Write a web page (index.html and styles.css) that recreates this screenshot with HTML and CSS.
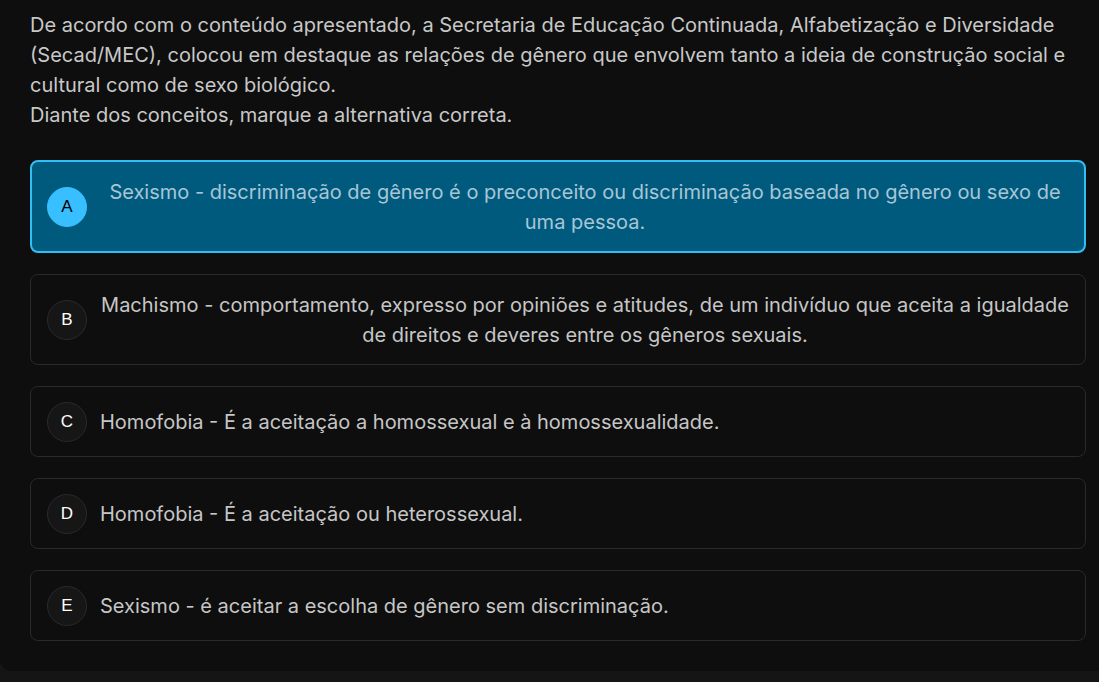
FILE: index.html
```html
<!DOCTYPE html>
<html lang="pt-BR">
<head>
<meta charset="utf-8">
<title>Questão</title>
<link rel="stylesheet" href="styles.css">
</head>
<body>
<div class="card">
  <div class="question">
    <p>De acordo com o conteúdo apresentado, a Secretaria de Educação Continuada, Alfabetização e Diversidade (Secad/MEC), colocou em destaque as relações de gênero que envolvem tanto a ideia de construção social e cultural como de sexo biológico.</p>
    <p>Diante dos conceitos, marque a alternativa correta.</p>
  </div>
  <div class="options">
    <div class="option selected">
      <span class="letter">A</span>
      <p class="text">Sexismo - discriminação de gênero é o preconceito ou discriminação baseada no gênero ou sexo de uma pessoa.</p>
    </div>
    <div class="option">
      <span class="letter">B</span>
      <p class="text">Machismo - comportamento, expresso por opiniões e atitudes, de um indivíduo que aceita a igualdade de direitos e deveres entre os gêneros sexuais.</p>
    </div>
    <div class="option">
      <span class="letter">C</span>
      <p class="text">Homofobia - É a aceitação a homossexual e à homossexualidade.</p>
    </div>
    <div class="option">
      <span class="letter">D</span>
      <p class="text">Homofobia - É a aceitação ou heterossexual.</p>
    </div>
    <div class="option">
      <span class="letter">E</span>
      <p class="text">Sexismo - é aceitar a escolha de gênero sem discriminação.</p>
    </div>
  </div>
</div>
</body>
</html>
```

FILE: styles.css
```css
html, body {
  margin: 0;
  padding: 0;
  background: #151515;
  height: 100%;
}
body {
  font-family: Inter, "Noto Sans", sans-serif;
  color: #c8c8c8;
  overflow: hidden;
}
.card {
  background: #0e0e0e;
  width: 1120px;
  box-sizing: border-box;
  padding: 10px 0 30px 30px;
  border-radius: 0 0 12px 12px;
}
.question {
  width: 1056px;
  font-size: 20px;
  line-height: 30px;
}
.question p {
  margin: 0;
}
.options {
  margin-top: 30px;
  width: 1056px;
  display: flex;
  flex-direction: column;
  gap: 21px;
}
.option {
  display: flex;
  align-items: center;
  gap: 13px;
  box-sizing: border-box;
  padding: 15px 15px 14px 16px;
  border: 1px solid #2a2a2a;
  border-radius: 8px;
  background: #0e0e0e;
}
.option.selected {
  border: 2px solid #33bdf5;
  background: #005a7e;
  padding: 15px 14px 14px 15px;
}
.letter {
  flex: none;
  width: 38px;
  height: 38px;
  border-radius: 50%;
  border: 1px solid #2a2a2a;
  background: #161616;
  color: #ffffff;
  font-family: "Liberation Sans", Arial, sans-serif;
  font-size: 17px;
  display: flex;
  align-items: center;
  justify-content: center;
}
.selected .letter {
  background: #38bfff;
  border-color: #38bfff;
  color: #000000;
}
.text {
  margin: 0;
  font-size: 20px;
  line-height: 30px;
  text-align: center;
  color: #c6c6c6;
}
.selected .text {
  color: #a8c6d5;
}
```
